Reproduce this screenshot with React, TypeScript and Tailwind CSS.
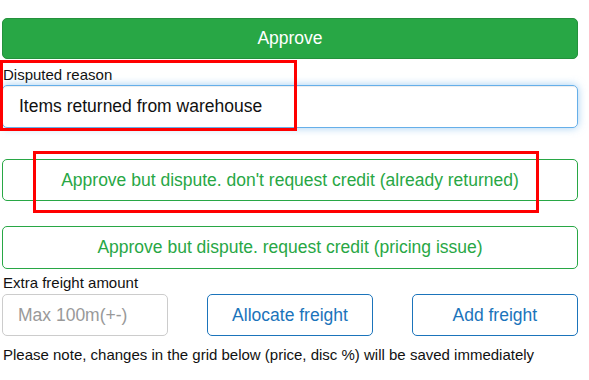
import React from 'react';

const FONT = { fontFamily: '"Liberation Sans", Arial, sans-serif' };

export default function App() {
  return (
    <div className="relative w-[589px] h-[380px] bg-white text-[#111]" style={FONT}>
      <div className="flex flex-col w-[576px] ml-[2px] pt-[18px]">
        <button className="h-[41px] rounded-[5px] bg-[#28a745] border border-[#24913c] text-white text-[17.5px]">
          Approve
        </button>

        <label className="mt-[5px] h-[21px] pl-[1px] text-[15px] leading-[21px]">Disputed reason</label>
        <input
          className="h-[43px] rounded-[5px] border border-[#66afe9] px-[16px] text-[17.5px] text-[#111] outline-none shadow-[inset_0_1px_1px_rgba(0,0,0,0.075),0_0_8px_rgba(102,175,233,0.6)]"
          defaultValue="Items returned from warehouse"
        />

        <button className="mt-[31px] h-[42px] rounded-[5px] border border-[#28a745] text-[#28a745] text-[17.5px] bg-white">
          Approve but dispute. don't request credit (already returned)
        </button>
        <button className="mt-[25px] h-[43px] rounded-[5px] border border-[#28a745] text-[#28a745] text-[17.5px] bg-white">
          Approve but dispute. request credit (pricing issue)
        </button>

        <label className="mt-[3px] h-[22px] pl-[1px] text-[15px] leading-[22px]">Extra freight amount</label>
        <div className="grid grid-cols-3 gap-[38.5px]">
          <input
            className="h-[42px] rounded-[5px] border border-[#ccc] px-[15px] text-[17.5px] outline-none placeholder:text-[#999]"
            placeholder="Max 100m(+-)"
          />
          <button className="h-[42px] rounded-[5px] border border-[#1b74bb] text-[#1b74bb] text-[17.5px] bg-white">
            Allocate freight
          </button>
          <button className="h-[42px] rounded-[5px] border border-[#1b74bb] text-[#1b74bb] text-[17.5px] bg-white">
            Add freight
          </button>
        </div>

        <p className="mt-[9px] pl-[1px] text-[15px] leading-[20px]">
          Please note, changes in the grid below (price, disc %) will be saved immediately
        </p>
      </div>

      {/* annotation boxes */}
      <div className="absolute left-0 top-[60px] w-[297px] h-[71px] border-[3px] border-[#ff0000]" />
      <div className="absolute left-[33px] top-[151px] w-[506px] h-[62px] border-[3px] border-[#ff0000]" />
    </div>
  );
}
